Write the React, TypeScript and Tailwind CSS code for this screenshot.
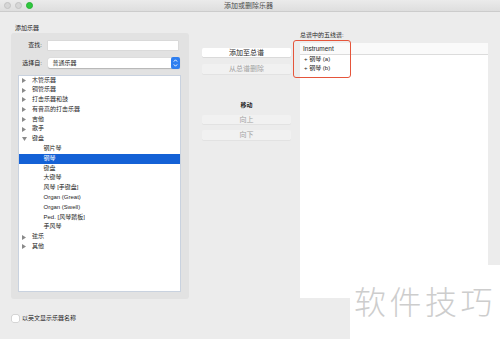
import React from "react";

const Arrow = ({ open }: { open?: boolean }) =>
  open ? (
    <svg width="5" height="4" viewBox="0 0 5 4" className="block">
      <path d="M0 0 L5 0 L2.5 4Z" fill="#8a8a8a" />
    </svg>
  ) : (
    <svg width="4" height="5" viewBox="0 0 4 5" className="block">
      <path d="M0 0 L4 2.5 L0 5Z" fill="#8a8a8a" />
    </svg>
  );

type Row = { label: string; level: 1 | 2; open?: boolean; selected?: boolean };

const rows: Row[] = [
  { label: "木管乐器", level: 1 },
  { label: "铜管乐器", level: 1 },
  { label: "打击乐器和鼓", level: 1 },
  { label: "有音高的打击乐器", level: 1 },
  { label: "吉他", level: 1 },
  { label: "歌手", level: 1 },
  { label: "键盘", level: 1, open: true },
  { label: "钢片琴", level: 2 },
  { label: "钢琴", level: 2, selected: true },
  { label: "键盘", level: 2 },
  { label: "大键琴", level: 2 },
  { label: "风琴 [手键盘]", level: 2 },
  { label: "Organ (Great)", level: 2 },
  { label: "Organ (Swell)", level: 2 },
  { label: "Ped. [风琴踏板]", level: 2 },
  { label: "手风琴", level: 2 },
  { label: "弦乐", level: 1 },
  { label: "其他", level: 1 },
];

export default function App() {
  return (
    <div className="relative w-[500px] h-[339px] overflow-hidden bg-[#ececec] font-['Liberation_Sans','Noto_Sans_CJK_SC',sans-serif] text-[#262626]">
      {/* Title bar */}
      <div className="relative h-[12px] bg-gradient-to-b from-[#ebebeb] to-[#dedede] border-b border-[#cccccc] flex items-center">
        <div className="flex items-center gap-[4px] pl-[4px]">
          <div className="w-[7px] h-[7px] rounded-full bg-[#d6d6d6] border border-[#c2c2c2]" />
          <div className="w-[7px] h-[7px] rounded-full bg-[#d6d6d6] border border-[#c2c2c2]" />
          <div className="w-[7px] h-[7px] rounded-full bg-[#2fc83e] border border-[#27b234]" />
        </div>
        <div className="flex-1 text-center text-[7px] leading-[12px] text-[#4a4a4a] pr-[36px]">添加或删除乐器</div>
      </div>

      {/* Body */}
      <div className="flex h-[327px]">
        {/* Left column */}
        <div className="ml-[11px] w-[178px] flex flex-col">
          <div className="mt-[12px] h-[8px] leading-[8px] text-[6px] pl-[4px]">添加乐器</div>
          <div className="mt-[1px] h-[266px] bg-[#e2e2e2] rounded-[3px] flex flex-col pl-[7px] pr-[8px] pb-[7px]">
            <div className="mt-[8px] h-[9px] flex items-center">
              <div className="w-[24px] text-right text-[6px] leading-[9px]">查找:</div>
              <div className="ml-[5.5px] w-[130.5px] h-[9px] bg-white shadow-[0_0_0_0.5px_#d0d0d0]" />
            </div>
            <div className="mt-[7.5px] h-[11px] flex items-center">
              <div className="w-[24px] text-right text-[6px] leading-[11px]">选择自:</div>
              <div className="ml-[5.5px] w-[132.5px] h-[10px] bg-white rounded-[2px] shadow-[0_0.5px_1px_rgba(0,0,0,0.2)] flex items-center">
                <div className="flex-1 pl-[5px] text-[6px] leading-[10px]">普通乐器</div>
                <div className="w-[9.5px] h-[12px] rounded-[2px] bg-[#2f7ff0] flex flex-col items-center justify-center gap-[1.5px]">
                  <svg width="5" height="3" viewBox="0 0 5 3"><path d="M0.8 2.6 L2.5 0.8 L4.2 2.6" stroke="white" strokeWidth="0.9" fill="none" /></svg>
                  <svg width="5" height="3" viewBox="0 0 5 3"><path d="M0.8 0.4 L2.5 2.2 L4.2 0.4" stroke="white" strokeWidth="0.9" fill="none" /></svg>
                </div>
              </div>
            </div>
            <div className="mt-[6px] flex-1 bg-white border-[1.5px] border-[#c9d2df] flex flex-col">
              {rows.map((r, i) => (
                <div
                  key={i}
                  className={`h-[9.8px] flex items-center text-[6px] leading-[9.8px] ${
                    r.selected ? "bg-[#1461d6] text-white" : ""
                  }`}
                >
                  {r.level === 1 ? (
                    <>
                      <div className="w-[13px] pl-[3px] flex items-center">
                        <Arrow open={r.open} />
                      </div>
                      <span>{r.label}</span>
                    </>
                  ) : (
                    <span className="pl-[24.5px]">{r.label}</span>
                  )}
                </div>
              ))}
            </div>
          </div>
          <div className="mt-[16px] h-[7px] flex items-center">
            <div className="ml-[1px] w-[7px] h-[7px] bg-white rounded-[1.5px] shadow-[0_0_0_0.5px_#bdbdbd]" />
            <div className="ml-[3px] text-[6px] leading-[7px]">以英文显示乐器名称</div>
          </div>
        </div>

        {/* Middle column */}
        <div className="ml-[13px] w-[89px] flex flex-col">
          <div className="mt-[35.5px] h-[9.5px] bg-white rounded-[1.5px] shadow-[0_0.5px_0.5px_rgba(0,0,0,0.15)] text-center text-[7px] leading-[9.5px] text-[#1f1f1f]">
            添加至总谱
          </div>
          <div className="mt-[6.5px] h-[10px] bg-[#f1f1f1] rounded-[1.5px] shadow-[0_0.5px_0.5px_rgba(0,0,0,0.08)] text-center text-[7px] leading-[10px] text-[#a3a3a3]">
            从总谱删除
          </div>
          <div className="mt-[27px] h-[8px] text-center text-[6px] leading-[8px] font-bold">移动</div>
          <div className="mt-[6px] h-[9.5px] bg-[#f1f1f1] rounded-[1.5px] shadow-[0_0.5px_0.5px_rgba(0,0,0,0.08)] text-center text-[7px] leading-[9.5px] text-[#a3a3a3]">
            向上
          </div>
          <div className="mt-[6px] h-[9.5px] bg-[#f1f1f1] rounded-[1.5px] shadow-[0_0.5px_0.5px_rgba(0,0,0,0.08)] text-center text-[7px] leading-[9.5px] text-[#a3a3a3]">
            向下
          </div>
        </div>

        {/* Right column */}
        <div className="ml-[9px] w-[188px] flex flex-col">
          <div className="mt-[19px] h-[8px] text-[6px] leading-[8px]">总谱中的五线谱:</div>
          <div className="mt-[4px] h-[255px] bg-white flex flex-col">
            <div className="h-[12px] border-b border-[#dcdcdc] pl-[3px] text-[6.5px] leading-[12px] bg-[#fafafa]">Instrument</div>
            <div className="h-[9px] pl-[4px] text-[6px] leading-[9px]">+ 钢琴 (a)</div>
            <div className="h-[9px] pl-[4px] text-[6px] leading-[9px]">+ 钢琴 (b)</div>
          </div>
        </div>
      </div>

      {/* Red annotation */}
      <div className="absolute left-[292.5px] top-[40px] w-[58px] h-[38px] rounded-[3px] border-[1.5px] border-[#e5553b]" />

      {/* Watermark */}
      <div className="absolute left-[350px] top-[265px] w-[150px] h-[74px] bg-white">
        <div className="pt-[19px] pl-[4px] text-[32px] leading-[32px] tracking-[3.5px] text-[#cdcdcd] font-light whitespace-nowrap font-['Noto_Sans_CJK_SC',sans-serif]">
          软件技巧
        </div>
      </div>
    </div>
  );
}
